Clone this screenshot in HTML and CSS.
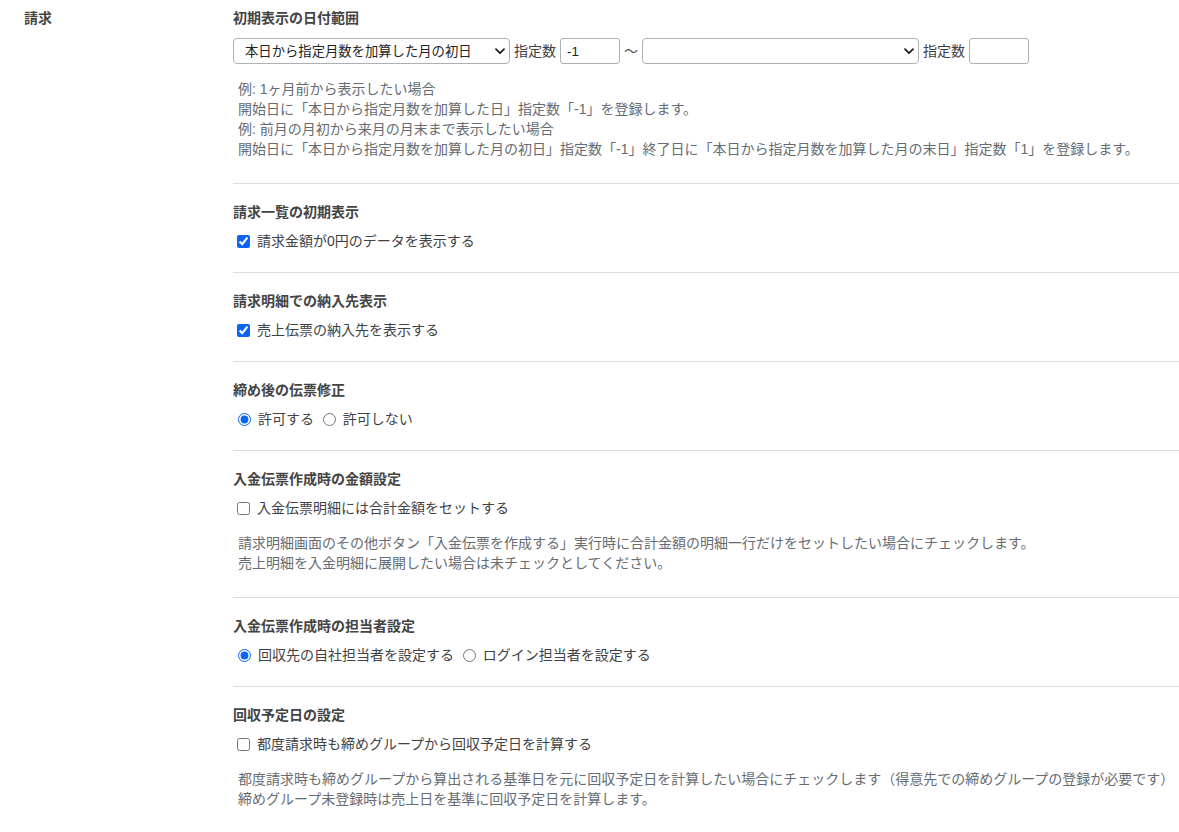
FILE: index.html
```html
<!DOCTYPE html>
<html lang="ja">
<head>
    <meta charset="UTF-8">
    <title>請求設定</title>
    <link rel="stylesheet" href="styles.css">
</head>
<body>
    <div class="settings">
        <div class="group-label">請求</div>
        <div class="group-body">

            <div class="section section-first">
                <div class="section-title">初期表示の日付範囲</div>
                <div class="range-row">
                    <span class="select-wrap">
                        <select class="range-select">
                            <option selected>本日から指定月数を加算した月の初日</option>
                            <option>本日から指定月数を加算した日</option>
                            <option>本日から指定月数を加算した月の末日</option>
                        </select>
                        <svg class="chevron" width="10" height="7" viewBox="0 0 10 7"><path d="M1 1.2 L5 5.2 L9 1.2" fill="none" stroke="#222" stroke-width="1.8" stroke-linecap="round" stroke-linejoin="round"/></svg>
                    </span>
                    <span>指定数</span>
                    <input type="text" class="num-input" value="-1">
                    <span class="tilde">〜</span>
                    <span class="select-wrap">
                        <select class="range-select">
                            <option selected></option>
                            <option>本日から指定月数を加算した日</option>
                            <option>本日から指定月数を加算した月の末日</option>
                        </select>
                        <svg class="chevron" width="10" height="7" viewBox="0 0 10 7"><path d="M1 1.2 L5 5.2 L9 1.2" fill="none" stroke="#222" stroke-width="1.8" stroke-linecap="round" stroke-linejoin="round"/></svg>
                    </span>
                    <span>指定数</span>
                    <input type="text" class="num-input" value="">
                </div>
                <p class="help">
                    例: 1ヶ月前から表示したい場合<br>
                    開始日に「本日から指定月数を加算した日」指定数「-1」を登録します。<br>
                    例: 前月の月初から来月の月末まで表示したい場合<br>
                    開始日に「本日から指定月数を加算した月の初日」指定数「-1」終了日に「本日から指定月数を加算した月の末日」指定数「1」を登録します。
                </p>
            </div>

            <div class="section">
                <div class="section-title">請求一覧の初期表示</div>
                <div class="option-row">
                    <label><input type="checkbox" checked> 請求金額が0円のデータを表示する</label>
                </div>
            </div>

            <div class="section">
                <div class="section-title">請求明細での納入先表示</div>
                <div class="option-row">
                    <label><input type="checkbox" checked> 売上伝票の納入先を表示する</label>
                </div>
            </div>

            <div class="section">
                <div class="section-title">締め後の伝票修正</div>
                <div class="option-row">
                    <label><input type="radio" name="edit" checked> 許可する</label>
                    <label><input type="radio" name="edit"> 許可しない</label>
                </div>
            </div>

            <div class="section">
                <div class="section-title">入金伝票作成時の金額設定</div>
                <div class="option-row">
                    <label><input type="checkbox"> 入金伝票明細には合計金額をセットする</label>
                </div>
                <p class="help">
                    請求明細画面のその他ボタン「入金伝票を作成する」実行時に合計金額の明細一行だけをセットしたい場合にチェックします。<br>
                    売上明細を入金明細に展開したい場合は未チェックとしてください。
                </p>
            </div>

            <div class="section">
                <div class="section-title">入金伝票作成時の担当者設定</div>
                <div class="option-row">
                    <label><input type="radio" name="staff" checked> 回収先の自社担当者を設定する</label>
                    <label><input type="radio" name="staff"> ログイン担当者を設定する</label>
                </div>
            </div>

            <div class="section section-last">
                <div class="section-title">回収予定日の設定</div>
                <div class="option-row">
                    <label><input type="checkbox"> 都度請求時も締めグループから回収予定日を計算する</label>
                </div>
                <p class="help">
                    都度請求時も締めグループから算出される基準日を元に回収予定日を計算したい場合にチェックします（得意先での締めグループの登録が必要です）<br>
                    締めグループ未登録時は売上日を基準に回収予定日を計算します。
                </p>
            </div>

        </div>
    </div>
</body>
</html>
```

FILE: styles.css
```css
body {
    margin: 0;
    font-family: "Liberation Sans", "Noto Sans CJK JP", sans-serif;
    font-size: 14px;
    line-height: 20px;
    color: #3f4245;
    background-color: white;
}
.settings {
    display: grid;
    grid-template-columns: 233px 1fr;
}
.group-label {
    padding: 8px 0 0 24px;
    font-weight: bold;
    color: #444;
}
.section {
    padding: 18px 0 20px;
    border-bottom: 1px solid #d7dde0;
}
.section-first {
    padding-top: 8px;
}
.section-last {
    border-bottom: none;
}
.section-title {
    font-weight: bold;
    color: #444;
    margin-bottom: 8px;
}
.range-row {
    display: flex;
    align-items: center;
    gap: 4px;
    height: 30px;
}
.select-wrap {
    position: relative;
    display: inline-block;
    height: 26px;
}
.range-select {
    appearance: none;
    -webkit-appearance: none;
    width: 277px;
    height: 26px;
    margin: 0;
    padding: 0 24px 0 11px;
    border: 1px solid #aeb1b4;
    border-radius: 4px;
    background-color: white;
    font-family: "Liberation Sans", "Noto Sans CJK JP", sans-serif;
    font-size: 13.33px;
    color: #222;
}
.chevron {
    position: absolute;
    right: 5px;
    top: 10px;
    pointer-events: none;
}
.num-input {
    width: 60px;
    height: 26px;
    margin: 0;
    padding: 0 6px;
    box-sizing: border-box;
    border: 1px solid #aeb1b4;
    border-radius: 3px;
    font-family: "Liberation Sans", "Noto Sans CJK JP", sans-serif;
    font-size: 13.33px;
    color: #222;
}
.tilde {
    color: #555;
}
.option-row {
    line-height: 22px;
    height: 22px;
}
input[type="checkbox"],
input[type="radio"] {
    accent-color: #0a66f2;
    vertical-align: -2px;
}
.help {
    margin: 14px 0 4px;
    padding-left: 5px;
    white-space: nowrap;
    color: #666c72;
}
.section-first .help {
    margin-top: 13px;
}
```
